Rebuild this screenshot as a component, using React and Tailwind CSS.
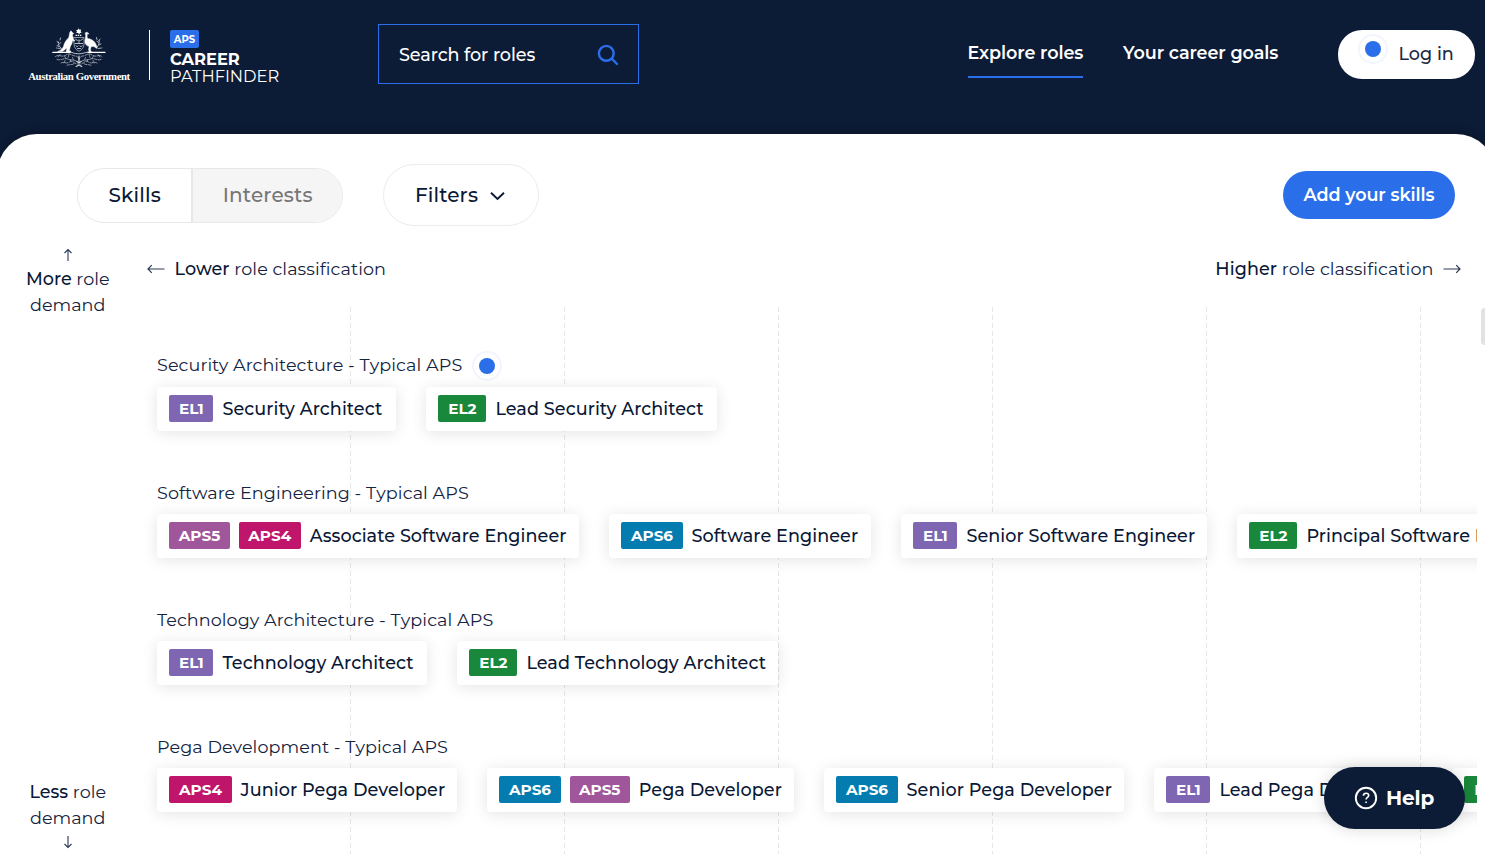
const badgeStyles = {
  EL1: "w-[44px] bg-[#7e66b3]",
  EL2: "w-[48px] bg-[#1a883b]",
  APS4: "w-[62.2px] bg-[#bf166c]",
  APS5: "w-[60.2px] bg-[#a0569b]",
  APS6: "w-[61.2px] bg-[#047cb0]",
};

const families = [
  {
    name: "Security Architecture - Typical APS",
    marked: true,
    roles: [
      { badges: ["EL1"], title: "Security Architect", style: "w-[239px]" },
      { badges: ["EL2"], title: "Lead Security Architect", style: "w-[291px]" },
    ],
  },
  {
    name: "Software Engineering - Typical APS",
    roles: [
      { badges: ["APS5", "APS4"], title: "Associate Software Engineer", style: "w-[422px]" },
      { badges: ["APS6"], title: "Software Engineer", style: "w-[262px]" },
      { badges: ["EL1"], title: "Senior Software Engineer", style: "w-[306px]" },
      { badges: ["EL2"], title: "Principal Software Engineer", style: "w-[324px]" },
    ],
  },
  {
    name: "Technology Architecture - Typical APS",
    roles: [
      { badges: ["EL1"], title: "Technology Architect", style: "w-[270px]" },
      { badges: ["EL2"], title: "Lead Technology Architect", style: "w-[321px]" },
    ],
  },
  {
    name: "Pega Development - Typical APS",
    roles: [
      { badges: ["APS4"], title: "Junior Pega Developer", style: "w-[300px]" },
      { badges: ["APS6", "APS5"], title: "Pega Developer", style: "w-[307px]" },
      { badges: ["APS6"], title: "Senior Pega Developer", style: "w-[300px]" },
      { badges: ["EL1"], title: "Lead Pega Developer", style: "w-[268px]" },
      { badges: ["EL2"], title: "Pega Practice Lead", style: "w-[260px]" },
    ],
  },
];

function Arrow({ className }) {
  return (
    <svg className={className} width="18" height="10" viewBox="0 0 18 10" fill="none" stroke="#2b3a54" strokeWidth="1.2">
      <path d="M17.5 5H1M4.8 1.2L1 5l3.8 3.8" />
    </svg>
  );
}

function Beacon({ className = "" }) {
  return (
    <span className={`flex size-[30px] shrink-0 items-center justify-center rounded-full border-2 border-[#f1f5fe] bg-white ${className}`}>
      <span className="size-4 rounded-full bg-[#2a6eea]" />
    </span>
  );
}

function CoatOfArms() {
  return (
    <svg width="54" height="40" viewBox="0 0 54 40" fill="none" stroke="#fff" strokeLinecap="round">
      <path d="M26.5 .3l1 1.500 1.700-.2-.6 1.600 1.200 1.400-1.800.3-.7 1.300-1.300-1.200-1.800.1.800-1.700-.9-1.400 1.900-.2z" fill="#fff" stroke="none" />
      <path d="M23.500 7.300h6.500" strokeWidth="1.300" strokeDasharray="1.400 .8" strokeLinecap="butt" />
      <path d="M19 3.100l1.400 1.500c1.400.5 1.600 1.200.7 1.600l-.8.300c.3 1.500 1 3 .8 4.800l1.700 1.200-.5.700-1.800-.7c-.2 2.500-1 4.200-2 5.400l-1.200 4.500 1.600.8v.8h-4.800l.8-4.200c-1.100.7-2.100 2.400-4.600 3.800H5.600c3-1.300 5-3 5.900-5.200.8-3.800 2.800-6.500 5.200-8.700l.7-3c0-1.400.7-3.600 1.600-3.600z" fill="#fff" stroke="#fff" strokeWidth=".5" />
      <path d="M33.400 5.100c.5-1 1.800-1.200 2.500-.3l1.200 1.100-1.800-.1c-.2 2-.4 3.500.4 4.800 2.800.2 7 2 8.800 6.900l.7 3-3.400-2-2.600.1-.8 2.700.5 2.200 1.400.9h-3.100l-.6-3.200.5-2.700c-3.100-.8-4.600-2.900-4.200-5.700.4-2.200 1.200-4 .5-7.700z" fill="#fff" stroke="#fff" strokeWidth=".5" />
      <path d="M22 9.500h10v6.800c0 3.500-2.300 5.600-5 7-2.800-1.400-5-3.500-5-7z" strokeWidth=".8" opacity=".65" />
      <path d="M23.200 15.500h7.600M23.600 11.200l1.700 1.200M30.500 11.200l-1.700 1.200M26.200 12.200h1.700M24 17.800c.7 1.200 1.500 1.200 2.200.2M28 18c.6 1 1.500 1 2.200-.2M25.500 20.500h3M27 13.500v1.500" strokeWidth="1" opacity=".7" />
      <path d="M.8 24.300h17M36 24.300h17" strokeWidth="1.300" />
      <path d="M18 24.200c3 .2 4 1.600 8.700 1.600s5.700-1.400 8.700-1.600" strokeWidth=".9" opacity=".8" />
      <path d="M9.500 21c-2-3-3.500-4-3.200-7M7 18.500l-2.700-1.200M7.200 16l2.300-2M5 13.500l1.500 1M8 20.500l-3.500-.5M8.500 10l-.5 2M44.500 20c2-2.500 3-4.500 2.800-7.500M47 17l2.500-1.300M46.800 14.500l-2.300-1.500M48.200 11l-1.500 1.500M46.500 20.500l3.500-.6M44.500 9.500l.5 2" strokeWidth="1" strokeDasharray="2.200 1.100" opacity=".65" />
      <path d="M3.500 28.500c3-2.700 7 1.500 10.500-1.500s6 1 9 1 3.500 2 4 3.500c.5-1.500 1.500-3.500 4-3.500s5.500-4 9-1 7-1.200 10 1.500M5 31.500c3.500 1.500 7-2 10.500-.5s7 .5 9.500 2.500M49 31.500c-3.500 1.500-7-2-10.500-.5s-7 .5-9.500 2.500M9 35c3-2 5.500 1.500 8.500-1s5 2 8 2M45 35c-3-2-5.500 1.500-8.500-1s-5 2-8 2M15 37.200c2.500-1 5 0 7-1.500M39 37.200c-2.500-1-5 0-7-1.500" strokeWidth=".85" strokeDasharray="3 1.300" opacity=".62" />
      <path d="M8 26.500l-2 2.500M12.500 28l1.500 2.500M17 26.500l-1 3M20.500 29.500l1 2.500M46 26.500l2 2.500M41.500 28L40 30.500M37 26.500l1 3M33.500 29.500l-1 2.500M13 32.500l-1 2.500M41 32.500l1 2.500M18 31.500l1 2M36 31.500l-1 2" strokeWidth=".8" opacity=".6" />
      <path d="M27 28v9M25 33.500l2 1.500 2-1.500M24.200 38.500l2.800-1.500 2.800 1.500" strokeWidth="1.200" opacity=".8" />
    </svg>
  );
}

function RoleCard({ badges, title, style }) {
  return (
    <article className={`flex h-[44.500px] shrink-0 items-center gap-[9px] rounded-[4px] bg-white pl-[12.400px] whitespace-nowrap shadow-[0_2px_16px_rgba(0,0,0,0.11)] ${style}`}>
      {badges.map((badge) => (
        <span key={badge} className={`flex h-[27px] shrink-0 items-center justify-center rounded-[2px] pt-[1.500px] text-[15.2px] font-bold text-white ${badgeStyles[badge]}`}>
          {badge}
        </span>
      ))}
      <span className="text-[17.6px] font-medium tracking-[0.07px]">{title}</span>
    </article>
  );
}

export default function App() {
  return (
    <div className="relative flex h-[858px] w-full flex-col overflow-hidden bg-[#0c1b36] font-['Montserrat','Inter',sans-serif] text-[#0a1835]">
      <header className="flex h-[134px] shrink-0 items-start text-white">
        <div className="ml-[28px] flex w-[102px] flex-col items-center pt-[28px]">
          <CoatOfArms />
          <span className="mt-[2px] font-['Liberation_Serif',serif] text-[10.800px] leading-[12px] font-bold tracking-[-0.400px] whitespace-nowrap">Australian Government</span>
        </div>
        <div className="mt-[30px] ml-[19px] h-[50px] w-px bg-white" />
        <div className="mt-[30px] ml-[20px] flex w-[208px] flex-col items-start">
          <span className="flex h-[18px] w-[29px] items-center justify-center rounded-[2px] bg-[#2a6eea] text-[10px] font-bold">APS</span>
          <span className="mt-[3px] text-[16.3px] leading-[17px] font-bold">CAREER</span>
          <span className="text-[16.3px] leading-[17px]">PATHFINDER</span>
        </div>
        <div className="mt-[24px] flex h-[60px] w-[261px] items-center justify-between border border-[#2a6eea] pr-[19px] pl-[20px]">
          <span className="pt-[2px] text-[17.6px] font-medium tracking-[-0.08px]">Search for roles</span>
          <svg className="mt-[1px]" width="22" height="22" viewBox="0 0 22 22" fill="none" stroke="#2a6eea" strokeWidth="2.4" strokeLinecap="round">
            <circle cx="9.300" cy="9.300" r="7.400" />
            <path d="M14.700 14.700L20 20" />
          </svg>
        </div>
        <nav className="mt-[41px] ml-auto flex gap-[40px] text-[17.6px] leading-[24px] font-semibold tracking-[-0.08px]">
          <a className="h-[36.500px] w-[115.500px] border-b-2 border-[#2a6eea] whitespace-nowrap">Explore roles</a>
          <a className="w-[156px] whitespace-nowrap">Your career goals</a>
        </nav>
        <button className="mt-[30px] mr-[10px] ml-[59px] flex h-[49px] w-[137px] rounded-[24px] bg-white pl-[20px] text-[#1c2943]">
          <Beacon className="mt-[4px]" />
          <span className="ml-[10.500px] pt-[12px] text-[17.6px] leading-[24px] font-medium whitespace-nowrap">Log in</span>
        </button>
      </header>

      <main className="-mr-[11px] -ml-[3px] flex min-h-0 flex-1 flex-col rounded-t-[40px] bg-white pr-[11px] pl-[3px] shadow-[0_-2px_8px_rgba(0,0,0,0.25)]">
        <div className="flex h-[122px] shrink-0 items-center pr-[30px] pl-[77.400px]">
          <div className="flex h-[55px] w-[266px] overflow-hidden rounded-full border border-[#e8e8e8] text-[20px] font-medium tracking-[0.15px]">
            <button className="w-[114.500px] border-r-2 border-[#e8e8e8]">Skills</button>
            <button className="flex-1 bg-[#f5f5f5] text-[#767676]">Interests</button>
          </div>
          <button className="ml-[39.500px] flex h-[62px] w-[156px] items-center rounded-full border border-[#ececec] pl-[31px] text-[20px] font-medium tracking-[0.15px]">
            Filters
            <svg className="mt-[1px] ml-[12px]" width="15" height="10" viewBox="0 0 15 10" fill="none" stroke="currentColor" strokeWidth="1.900">
              <path d="M1 1.800l6.500 6.200L14 1.800" />
            </svg>
          </button>
          <button className="ml-auto h-[48px] w-[172px] rounded-full bg-[#2a6eea] text-[17.6px] font-semibold tracking-[-0.08px] text-white">Add your skills</button>
        </div>

        <div className="flex min-h-0 flex-1">
          <aside className="flex w-[135.500px] flex-col items-center justify-between pb-[9.500px] text-center text-[17.6px] leading-[26px] text-[#14233f]">
            <div className="-mt-[7.600px] flex flex-col items-center">
              <svg width="10" height="14" viewBox="0 0 10 14" fill="none" stroke="#2b3a54" strokeWidth="1.100">
                <path d="M5 13V1.500M1.500 5L5 1.500l3.500 3.500" />
              </svg>
              <p className="mt-[4px] whitespace-nowrap"><b className="font-medium text-[#0a1835]">More</b> role</p>
              <p>demand</p>
            </div>
            <div className="flex flex-col items-center">
              <p className="whitespace-nowrap"><b className="font-medium text-[#0a1835]">Less</b> role</p>
              <p>demand</p>
              <svg className="mt-[4px]" width="10" height="14" viewBox="0 0 10 14" fill="none" stroke="#2b3a54" strokeWidth="1.100">
                <path d="M5 1v11.500M1.500 9L5 12.500 8.500 9" />
              </svg>
            </div>
          </aside>

          <section className="-ml-[0.500px] flex min-w-0 flex-1 flex-col">
            <div className="flex h-[51px] shrink-0 items-start justify-between pr-[24.500px] pl-[12px] text-[17.6px] leading-[26px] tracking-[0.07px] text-[#14233f]">
              <p className="flex items-center gap-[9.500px]">
                <Arrow />
                <span><b className="font-medium text-[#0a1835]">Lower</b> role classification</span>
              </p>
              <p className="flex items-center gap-[9px]">
                <span><b className="font-medium text-[#0a1835]">Higher</b> role classification</span>
                <Arrow className="rotate-180" />
              </p>
            </div>

            <div className="relative mr-[8px] flex-1 overflow-hidden pt-[43.500px] pl-[22px]">
              <div className="absolute inset-y-0 left-[2px] flex">
                {[0, 1, 2, 3, 4, 5].map((line) => (
                  <div key={line} className="mb-[4px] flex w-[214px] justify-end">
                    <div className="w-px bg-[repeating-linear-gradient(to_bottom,#e6e6e6_0_5px,transparent_5px_8px)]" />
                  </div>
                ))}
              </div>
              <div className="relative flex flex-col">
                {families.map((family) => (
                  <div key={family.name} className="h-[127px]">
                    <div className="flex h-[36px] items-start gap-[10px]">
                      <h2 className={`text-[17.6px] leading-[26px] tracking-[0.07px] whitespace-nowrap text-[#14233f] ${family.marked ? "pt-[1.500px]" : "pt-[2.200px]"}`}>{family.name}</h2>
                      {family.marked && <Beacon />}
                    </div>
                    <div className="flex gap-[30px]">
                      {family.roles.map((role) => (
                        <RoleCard key={role.title} {...role} />
                      ))}
                    </div>
                  </div>
                ))}
              </div>
            </div>
          </section>
        </div>
      </main>

      <div className="absolute top-[308px] right-0 h-[37px] w-[4px] rounded-l-[4px] bg-[#e2e2e2]" />
      <button className="absolute right-[20px] bottom-[29px] flex h-[62px] w-[141px] items-center rounded-full bg-[#0c1b36] pl-[30px] text-[20px] font-bold tracking-[-0.1px] text-white shadow-[0_0_16px_rgba(0,0,0,0.15)]">
        <svg width="24" height="24" viewBox="0 0 24 24" fill="none" stroke="currentColor" strokeWidth="1.900">
          <circle cx="12" cy="12" r="10.200" />
          <path d="M9.400 9.700c.1-1.500 1.200-2.400 2.700-2.400s2.600.8 2.600 2.200c0 1.900-2.600 2-2.600 4.100M12.100 15.400v1.700" strokeWidth="1.600" />
        </svg>
        <span className="ml-[8px]">Help</span>
      </button>
    </div>
  );
}
